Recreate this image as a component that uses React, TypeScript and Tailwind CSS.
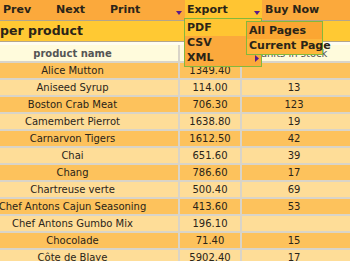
import React from 'react'

const rows = [
  { name: 'Alice Mutton', price: '1349.40', units: '' },
  { name: 'Aniseed Syrup', price: '114.00', units: '13' },
  { name: 'Boston Crab Meat', price: '706.30', units: '123' },
  { name: 'Camembert Pierrot', price: '1638.80', units: '19' },
  { name: 'Carnarvon Tigers', price: '1612.50', units: '42' },
  { name: 'Chai', price: '651.60', units: '39' },
  { name: 'Chang', price: '786.60', units: '17' },
  { name: 'Chartreuse verte', price: '500.40', units: '69' },
  { name: 'Chef Antons Cajun Seasoning', price: '413.60', units: '53' },
  { name: 'Chef Antons Gumbo Mix', price: '196.10', units: '' },
  { name: 'Chocolade', price: '71.40', units: '15' },
  { name: 'Côte de Blaye', price: '5902.40', units: '17' },
]

const DownArrow = () => (
  <svg width="6" height="4" viewBox="0 0 6 4" className="shrink-0">
    <path d="M0 0 L6 0 L3 4 Z" fill="#5a1a8a" />
  </svg>
)

const App = () => {
  return (
    <div className="relative w-[350px] h-[261px] overflow-hidden bg-white font-['DejaVu_Sans',sans-serif] text-[#2a2418]">
      {/* toolbar */}
      <div className="flex h-[20px] bg-[#fba93c] text-[11px] font-bold">
        <div className="w-[53px] pl-[3px] pt-[1px] flex items-center">Prev</div>
        <div className="w-[54px] pl-[3px] pt-[1px] flex items-center">Next</div>
        <div className="w-[78px] pl-[3px] pr-[3px] pt-[1px] flex items-center justify-between">
          <span>Print</span>
          <span className="pt-[5px]"><DownArrow /></span>
        </div>
        <div className="w-[77px] pl-[2px] pr-[2px] pt-[1px] flex items-center justify-between bg-[#ffc532]">
          <span>Export</span>
          <span className="pt-[5px]"><DownArrow /></span>
        </div>
        <div className="pl-[3px] pt-[1px] flex items-center">Buy Now</div>
      </div>
      <div className="h-[1px] bg-[#b3a58c]" />
      <div className="h-[20px] bg-[#ffc933] flex items-center text-[12.5px] font-bold">per product</div>
      <div className="h-[1px] bg-[#b3a58c]" />
      <div className="h-[3px] bg-[#fffdf0]" />

      {/* table */}
      <div className="-ml-[33px] text-[10px]">
        <div className="flex h-[18px] bg-[#fffbdc] border-b-2 border-[#d9d4c8] text-[#555]">
          <div className="w-[213px] border-r-2 border-[#d9d4c8] flex items-center justify-center font-bold">product name</div>
          <div className="w-[62px] border-r-2 border-[#d9d4c8]" />
          <div className="w-[104px] flex items-center justify-center">units in stock</div>
        </div>
        {rows.map((r, i) => (
          <div
            key={r.name}
            className={`flex h-[17px] border-b-2 border-[#d9d4c8] ${i % 2 === 0 ? 'bg-[#fdc25c]' : 'bg-[#fedd98]'}`}
          >
            <div className="w-[213px] border-r-2 border-[#d9d4c8] flex items-center justify-center whitespace-nowrap">{r.name}</div>
            <div className="w-[62px] border-r-2 border-[#d9d4c8] flex items-center justify-center">{r.price}</div>
            <div className="w-[104px] flex items-center justify-center">{r.units}</div>
          </div>
        ))}
      </div>

      {/* export dropdown */}
      <div className="absolute left-[184px] top-[18px] w-[78px] border border-[#84b83c] bg-[#fba93c] text-[11px] font-bold">
        <div className="h-[17px] pl-[2px] pt-[1px] flex items-center bg-[#ffc532]">PDF</div>
        <div className="h-[15px] pl-[2px] flex items-center">CSV</div>
        <div className="h-[15px] pl-[2px] pr-[2px] flex items-center justify-between">
          <span>XML</span>
          <svg width="4" height="7" viewBox="0 0 4 7">
            <path d="M0 0 L4 3.5 L0 7 Z" fill="#5a1a8a" />
          </svg>
        </div>
      </div>

      {/* submenu */}
      <div className="absolute left-[246px] top-[21px] w-[77px] border border-[#84b83c] text-[11px] font-bold">
        <div className="h-[17px] pl-[2px] pt-[1px] flex items-center bg-[#fba632]">All Pages</div>
        <div className="h-[15px] pl-[2px] flex items-center bg-[#fdb63c] whitespace-nowrap">Current Page</div>
      </div>
    </div>
  )
}

export default App
